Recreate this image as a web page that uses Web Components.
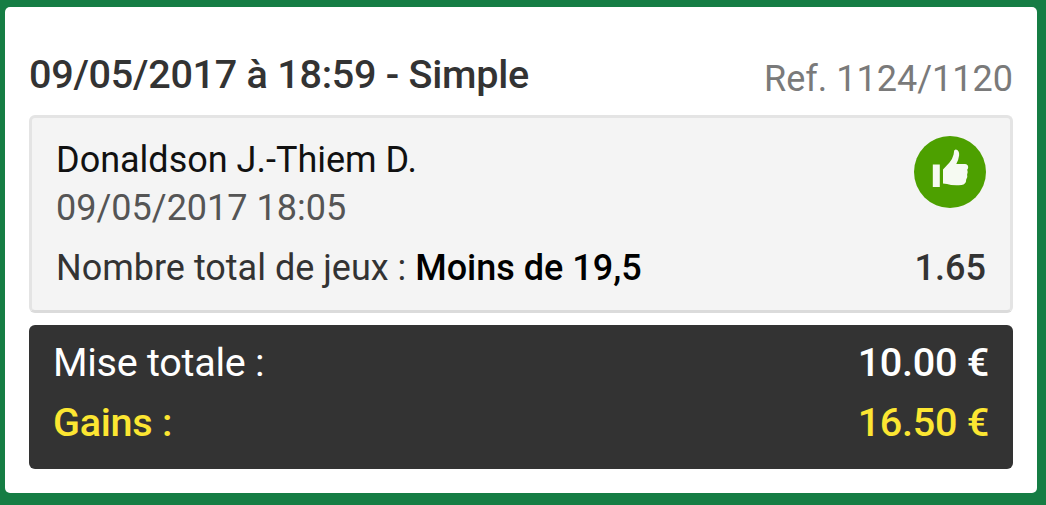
<!DOCTYPE html>
<html lang="fr">
<head>
<meta charset="utf-8">
<title>Mes paris</title>
<style>
	body {
		margin: 0;
		padding: 7px 9px 12px 5px;
		background: #157d44;
		font-family: Roboto, "Liberation Sans", sans-serif;
	}
</style>
</head>
<body>
<bet-ticket>
	<span slot="title">09/05/2017 à 18:59 - Simple</span>
	<span slot="ref">Ref. 1124/1120</span>
	<bet-event odds="1.65">
		<span slot="name">Donaldson J.-Thiem D.</span>
		<span slot="date">09/05/2017 18:05</span>
		<span slot="market">Nombre total de jeux :</span>
		<span slot="pick">Moins de 19,5</span>
		<won-icon slot="status"></won-icon>
	</bet-event>
	<bet-totals slot="totals">
		<total-row amount="10.00 €">Mise totale :</total-row>
		<total-row amount="16.50 €" win>Gains :</total-row>
	</bet-totals>
</bet-ticket>
<script>
class BetTicket extends HTMLElement {
	constructor () {
		super();
		this.attachShadow({ mode: "open" });
		this.shadowRoot.innerHTML = `
			<style>
				:host {
					display: flex;
					flex-direction: column;
					gap: 12px;
					box-sizing: border-box;
					height: 486px;
					padding: 43px 24px 24px;
					border-radius: 5px;
					background: #fff;
				}
				header {
					display: flex;
					justify-content: space-between;
					height: 53px;
					line-height: 48px;
					white-space: nowrap;
				}
				h2 {
					margin: 0;
					padding-top: 1px;
					font-size: 39.6px;
					font-weight: 500;
					letter-spacing: -0.28px;
					color: #333;
				}
				.ref {
					padding-top: 5px;
					font-size: 36px;
					color: #7a7a7a;
				}
			</style>
			<header>
				<h2><slot name="title"></slot></h2>
				<div class="ref"><slot name="ref"></slot></div>
			</header>
			<slot></slot>
			<slot name="totals"></slot>
		`;
	}
}

class BetEvent extends HTMLElement {
	constructor () {
		super();
		this.attachShadow({ mode: "open" });
		this.shadowRoot.innerHTML = `
			<style>
				:host {
					display: block;
					box-sizing: border-box;
					height: 198px;
					padding: 18px 24px;
					border: 3px solid #e4e4e4;
					border-bottom-color: #dbdbdb;
					border-radius: 6px;
					background: #f4f4f4;
					font-size: 36px;
					line-height: 48px;
					color: #333;
				}
				.row {
					display: flex;
					justify-content: space-between;
					white-space: nowrap;
				}
				.name { color: #111; }
				.date { color: #555; }
				.bet { margin-top: 12px; }
				b { font-weight: 500; }
				.pick { color: #000; }
			</style>
			<div class="row">
				<div>
					<div class="name"><slot name="name"></slot></div>
					<div class="date"><slot name="date"></slot></div>
				</div>
				<slot name="status"></slot>
			</div>
			<div class="row bet">
				<div><slot name="market"></slot> <b class="pick"><slot name="pick"></slot></b></div>
				<b class="odds"></b>
			</div>
		`;
	}

	connectedCallback () {
		this.shadowRoot.querySelector(".odds").textContent = this.getAttribute("odds");
	}
}

class WonIcon extends HTMLElement {
	constructor () {
		super();
		this.attachShadow({ mode: "open" });
		this.shadowRoot.innerHTML = `
			<style>
				:host { display: block; width: 72px; height: 72px; }
				svg { display: block; }
			</style>
			<svg width="72" height="72" viewBox="0 0 72 72">
				<circle cx="36" cy="36" r="36" fill="#4da000"/>
				<g fill="#f6faf2">
					<path d="M18.8 28.5h7v22.5h-7z"/>
					<path d="M29 33.5L35.5 26.5Q38.5 23 39.6 18.5L40.2 14.5Q41.5 12.8 43.3 14Q45.5 15.5 45.1 19.5Q44.5 24 42.3 28H51Q54 28.3 54.2 31Q54.2 32.8 53.2 33.8Q54.3 36 53.1 38.8Q54 41.5 52.2 43.6Q52.2 48.6 47.5 49Q38 49.7 33 48L29 47.5Z"/>
				</g>
			</svg>
		`;
	}
}

class BetTotals extends HTMLElement {
	constructor () {
		super();
		this.attachShadow({ mode: "open" });
		this.shadowRoot.innerHTML = `
			<style>
				:host {
					display: block;
					box-sizing: border-box;
					height: 144px;
					padding: 8px 24px 16px;
					border-radius: 6px;
					background: #333;
				}
			</style>
			<slot></slot>
		`;
	}
}

class TotalRow extends HTMLElement {
	constructor () {
		super();
		this.attachShadow({ mode: "open" });
		this.shadowRoot.innerHTML = `
			<style>
				:host {
					display: flex;
					justify-content: space-between;
					font-size: 39.6px;
					line-height: 60px;
					letter-spacing: -0.28px;
					color: #fff;
				}
				:host([win]) {
					font-weight: 500;
					color: #fce632;
				}
				.amount { font-weight: 500; }
			</style>
			<span><slot></slot></span>
			<span class="amount"></span>
		`;
	}

	connectedCallback () {
		this.shadowRoot.querySelector(".amount").textContent = this.getAttribute("amount");
	}
}

customElements.define("bet-ticket", BetTicket);
customElements.define("bet-event", BetEvent);
customElements.define("won-icon", WonIcon);
customElements.define("bet-totals", BetTotals);
customElements.define("total-row", TotalRow);
</script>
</body>
</html>
